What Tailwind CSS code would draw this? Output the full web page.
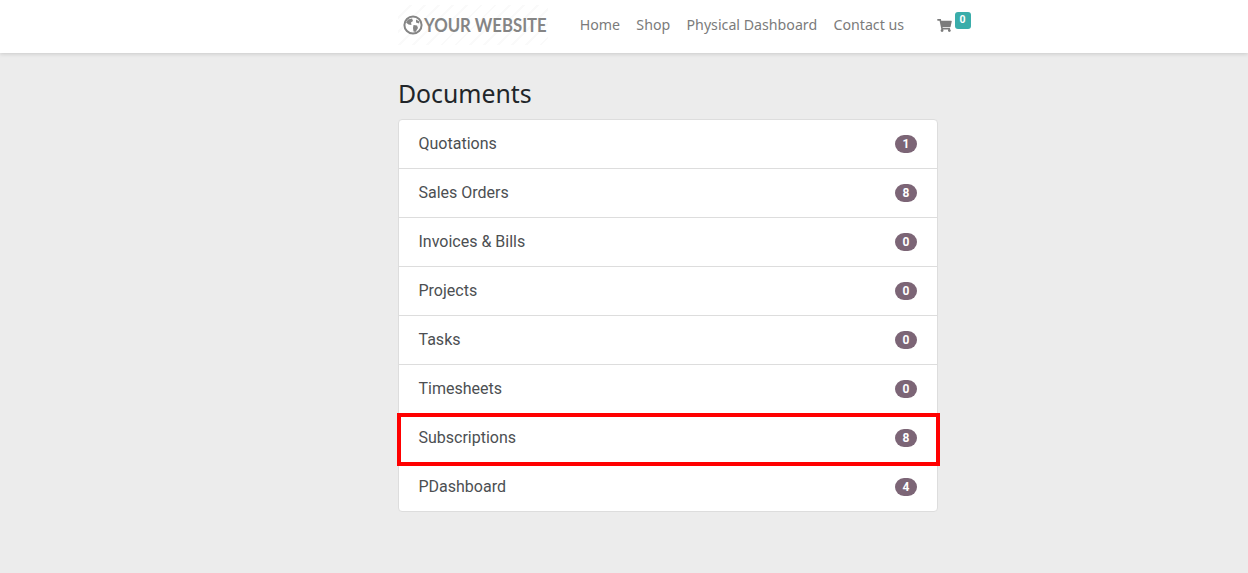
<!DOCTYPE html>
<html lang="en">
<head>
  <meta charset="UTF-8">
  <title>Documents</title>
  <script src="https://cdn.jsdelivr.net/npm/@tailwindcss/browser@4"></script>
</head>
<body class="bg-[#ececec] font-['Roboto',sans-serif] h-[573px] overflow-hidden">
  <!-- Top nav -->
  <nav class="bg-white h-[53px] shadow-[0_1px_4px_rgba(0,0,0,0.15)] relative">
    <div class="w-[540px] ml-[398px] flex items-center h-full relative">
      <a class="flex items-center w-[150px] h-[40px] mb-[3px] pl-[5px] gap-[1px] bg-[repeating-linear-gradient(135deg,#ffffff_0px,#ffffff_8px,#fafafa_8px,#fafafa_10px)]">
        <svg viewBox="0 0 20 20" class="w-[20px] h-[20px] shrink-0">
          <circle cx="10" cy="10" r="8.6" fill="none" stroke="#858585" stroke-width="2"/>
          <path d="M5 4.5 L9 3.5 L10 6 L8 7.5 L8.5 10 L5.5 9.5 L3 7.5 Z M10.5 10 L14 10.5 L15 13 L12.5 17 L10.5 16.5 L10 13 Z M13 4.5 L16.5 6.5 L16 8.5 L13 7.5 Z" fill="#858585"/>
        </svg>
        <span class="font-['Lato',sans-serif] font-bold text-[19px] leading-none mb-[2px] text-[#858585] whitespace-nowrap origin-left scale-x-[0.88]">YOUR WEBSITE</span>
      </a>
      <ul class="flex ml-[31.7px] mb-[3px] gap-[16.3px] font-['Noto_Sans',sans-serif] text-[14.2px] text-[#7b7b7b] whitespace-nowrap">
        <li>Home</li>
        <li>Shop</li>
        <li>Physical Dashboard</li>
        <li>Contact us</li>
      </ul>
      <div class="ml-[32.5px] relative w-[15px] h-[14px] self-start mt-[19px]">
        <svg viewBox="0 0 576 512" class="w-[15px] h-[13px]" fill="#7b7b7b">
          <path d="M528 301l47-208c3-15-8-29-23-29H159l-9-47C148 7 139 0 128 0H24C11 0 0 11 0 24v16c0 13 11 24 24 24h70l70 343c-17 10-28 28-28 49 0 31 25 56 56 56s56-25 56-56c0-16-6-30-17-40h210c-11 10-17 24-17 40 0 31 25 56 56 56s56-25 56-56c0-22-13-41-32-50l5-24c3-15-8-29-23-29H217l-6-32h293c11 0 21-8 24-19z"/>
        </svg>
        <span class="absolute left-[18px] top-[-7px] w-[16px] h-[17px] rounded-[3px] bg-[#3aadaa] text-white text-[10.5px] font-bold flex items-center justify-center leading-none">0</span>
      </div>
    </div>
  </nav>

  <main class="w-[540px] ml-[398px] relative">
    <h1 class="font-['Noto_Sans',sans-serif] text-[24.8px] leading-[30px] text-[#212529] mt-[25px] mb-[11px]">Documents</h1>
    <ul class="bg-white border border-[#dddddd] rounded-[4px] text-[16px] text-[#4c4f52]">
      <li class="h-[49px] pl-[19.5px] pr-[20px] flex items-center justify-between border-b border-[#dddddd]"><span>Quotations</span><span class="w-[22px] h-[18px] rounded-full bg-[#7c6576] text-white text-[12px] font-bold flex items-center justify-center">1</span></li>
      <li class="h-[49px] pl-[19.5px] pr-[20px] flex items-center justify-between border-b border-[#dddddd]"><span>Sales Orders</span><span class="w-[22px] h-[18px] rounded-full bg-[#7c6576] text-white text-[12px] font-bold flex items-center justify-center">8</span></li>
      <li class="h-[49px] pl-[19.5px] pr-[20px] flex items-center justify-between border-b border-[#dddddd]"><span>Invoices &amp; Bills</span><span class="w-[22px] h-[18px] rounded-full bg-[#7c6576] text-white text-[12px] font-bold flex items-center justify-center">0</span></li>
      <li class="h-[49px] pl-[19.5px] pr-[20px] flex items-center justify-between border-b border-[#dddddd]"><span>Projects</span><span class="w-[22px] h-[18px] rounded-full bg-[#7c6576] text-white text-[12px] font-bold flex items-center justify-center">0</span></li>
      <li class="h-[49px] pl-[19.5px] pr-[20px] flex items-center justify-between border-b border-[#dddddd]"><span>Tasks</span><span class="w-[22px] h-[18px] rounded-full bg-[#7c6576] text-white text-[12px] font-bold flex items-center justify-center">0</span></li>
      <li class="h-[49px] pl-[19.5px] pr-[20px] flex items-center justify-between border-b border-[#dddddd]"><span>Timesheets</span><span class="w-[22px] h-[18px] rounded-full bg-[#7c6576] text-white text-[12px] font-bold flex items-center justify-center">0</span></li>
      <li class="h-[49px] pl-[19.5px] pr-[20px] flex items-center justify-between border-b border-[#dddddd] relative">
        <span>Subscriptions</span><span class="w-[22px] h-[18px] rounded-full bg-[#7c6576] text-white text-[12px] font-bold flex items-center justify-center">8</span>
        <!-- red highlight -->
        <div class="absolute left-[-2px] top-[-1px] w-[543px] h-[53px] border-4 border-[#ff0000]"></div>
      </li>
      <li class="h-[48px] pl-[19.5px] pr-[20px] flex items-center justify-between"><span>PDashboard</span><span class="w-[22px] h-[18px] rounded-full bg-[#7c6576] text-white text-[12px] font-bold flex items-center justify-center">4</span></li>
    </ul>
  </main>
</body>
</html>
